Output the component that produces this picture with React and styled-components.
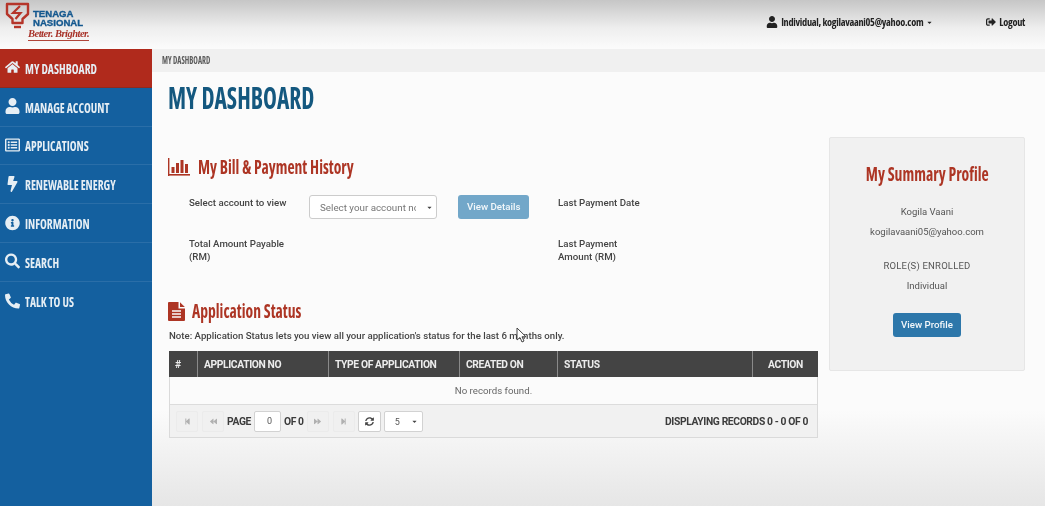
import React from "react";
import styled, { createGlobalStyle } from "styled-components";
import {
  FaHome, FaUser, FaRegListAlt, FaBolt, FaInfoCircle, FaSearch, FaPhoneAlt,
  FaStepBackward, FaBackward, FaForward, FaStepForward, FaSyncAlt, FaSignOutAlt, FaCaretDown,
} from "react-icons/fa";

const din = `"Open Sans", "Roboto", sans-serif`;
const body = `"Roboto", "Liberation Sans", sans-serif`;

const Global = createGlobalStyle`
  html, body { margin: 0; padding: 0; background: #fafafa; }
  * { box-sizing: border-box; }
`;

const Page = styled.div`
  position: relative;
  width: 1045px;
  height: 506px;
  overflow: hidden;
  display: flex;
  flex-direction: column;
  font-family: ${body};
  color: #444;
  filter: blur(0.35px);
  background: linear-gradient(#fbfbfb 0, #fbfbfb 410px, #e6e6e6 506px);
`;

const Squeeze = styled.span`
  display: inline-block;
  white-space: nowrap;
  transform: scaleX(${(p) => p.$k});
  transform-origin: ${(p) => p.$origin || "left"} center;
`;

const Header = styled.header`
  height: 49px;
  flex: none;
  display: flex;
  align-items: center;
  justify-content: space-between;
  padding: 0 20px 5px 5px;
  background: linear-gradient(#c6c6c6 0, #eeeeee 28px, #fbfbfb 48px);
`;

const Logo = styled.div`
  display: flex;
  gap: 3px;
  position: relative;
  height: 44px;
  align-self: flex-start;
  margin-top: 2px;
`;

const BrandName = styled.div`
  font: 700 9.6px/9px "Liberation Sans", sans-serif;
  color: #14588f;
  padding-top: 6.5px;
  -webkit-text-stroke: 0.35px #14588f;
`;

const Tagline = styled.div`
  position: absolute;
  left: 23px;
  top: 26px;
  height: 13px;
  font: italic 700 10.5px/12px "Liberation Serif", serif;
  letter-spacing: -0.5px;
  color: #a8332a;
  border-bottom: 1px solid #b0453a;
  white-space: nowrap;
`;

const UserNav = styled.nav`
  display: flex;
  align-items: center;
  font: 700 condensed 10.3px/14px ${din};
  letter-spacing: -0.28px;
  color: #222;
`;

const NavLink = styled.span`
  display: inline-flex;
  align-items: center;
  gap: 3px;
  margin-left: ${(p) => p.$gap || 0}px;
  svg { flex: none; }
`;

const Row = styled.div`
  flex: 1;
  display: flex;
  min-height: 0;
`;

const Sidebar = styled.aside`
  width: 152px;
  flex: none;
  background: #14609f;
`;

const MenuItem = styled.div`
  height: 38.8px;
  display: flex;
  align-items: center;
  gap: 5px;
  padding: 2px 0 0 5px;
  background: ${(p) => (p.$active ? "#b02a1c" : "transparent")};
  border-bottom: 1px solid ${(p) => (p.$active ? "#8f2a1f" : "#2a6ea8")};
  color: #e6eef4;
  font: 700 condensed 14.5px/18px ${din};
  white-space: nowrap;
  &:last-child { border-bottom: none; }
`;

const MenuIcon = styled.span`
  width: 15px;
  display: flex;
  justify-content: center;
  font-size: 16px;
  margin-bottom: 3px;
`;

const Content = styled.main`
  flex: 1;
  min-width: 0;
`;

const Crumb = styled.div`
  height: 23px;
  padding-left: 10px;
  background: #f0f0f0;
  font: 700 condensed 10.3px/23px ${din};
  color: #5a5a5a;
`;

const PageTitle = styled.h1`
  margin: 9px 0 0 16px;
  height: 38px;
  font: 700 condensed 29.5px/34px ${din};
  color: #14587f;
`;

const Columns = styled.div`
  display: grid;
  grid-template-columns: 649px 196px;
  column-gap: 11px;
  padding-left: 17px;
`;

const Main = styled.section`
  padding-top: 36px;
`;

const SectionTitle = styled.h2`
  margin: 0 0 0 -1px;
  display: flex;
  align-items: center;
  height: 24px;
  gap: ${(p) => p.$gap}px;
  font: 700 condensed 20px/24px ${din};
  color: #ad3524;
`;

const BillGrid = styled.div`
  display: grid;
  grid-template-columns: 120px 149px 100px 200px;
  padding: 16px 0 0 20px;
  font-size: 9.7px;
  line-height: 13px;
  font-weight: 500;
  color: #444;
`;

const Label = styled.div`
  padding-top: ${(p) => p.$pt || 0}px;
`;

const FakeSelect = styled.div`
  width: 128px;
  height: 24px;
  background: #fff;
  border: 1px solid #ccc;
  border-radius: 3px;
  display: flex;
  align-items: center;
  padding: 0 3px 0 10px;
  font-size: 9.8px;
  font-weight: 400;
  color: #777;
  white-space: nowrap;
`;

const SelectText = styled.span`
  width: 96px;
  overflow: hidden;
`;

const Caret = styled.span`
  flex: none;
  margin-left: auto;
  color: #444;
  display: flex;
  font-size: 7px;
`;

const Button = styled.div`
  display: inline-block;
  height: 24px;
  padding: 0 ${(p) => p.$pad}px;
  background: ${(p) => p.$bg};
  border-radius: 3px;
  font: 500 9.7px/24px ${body};
  color: #f2f7fa;
`;

const SecondRow = styled.div`
  grid-column: 1 / -1;
  display: grid;
  grid-template-columns: 369px 200px;
  padding-top: 18px;
`;

const AppSection = styled.div`
  margin-top: 36px;
`;

const Note = styled.p`
  margin: 6px 0 0 0;
  height: 16px;
  font-size: 9.65px;
  line-height: 13px;
  color: #444;
  font-weight: 500;
`;

const Table = styled.div`
  margin-top: 6px;
  border: 1px solid #dadada;
  border-top: none;
`;

const TableHead = styled.div`
  display: grid;
  grid-template-columns: 28px 131px 131px 98px 195px 1fr;
  height: 26px;
  background: #444;
  margin: 0 -1px;
`;

const HeadCell = styled.div`
  height: 26px;
  border-left: ${(p) => (p.$first ? "none" : "1px solid #8a8a8a")};
  padding: 1px 0 0 ${(p) => (p.$center ? 0 : 6)}px;
  text-align: ${(p) => (p.$center ? "center" : "left")};
  font: 700 10.3px/25px ${body};
  letter-spacing: -0.38px;
  color: #ececec;
  white-space: nowrap;
`;

const EmptyRow = styled.div`
  height: 28px;
  background: #fbfbfb;
  border-bottom: 1px solid #dcdcdc;
  text-align: center;
  font-size: 9.7px;
  line-height: 28px;
  color: #666;
`;

const Pager = styled.div`
  height: 32px;
  background: #f1f1f1;
  display: flex;
  align-items: center;
  padding: 1px 9px 0 6px;
`;

const PagerBtn = styled.div`
  width: ${(p) => (p.$on ? 23 : 22)}px;
  height: 21px;
  margin-right: ${(p) => p.$mr || 0}px;
  border: 1px solid ${(p) => (p.$on ? "#cfcfcf" : "#ebebeb")};
  border-radius: 2px;
  background: ${(p) => (p.$on ? "#fff" : "#f0f0f0")};
  color: ${(p) => (p.$on ? "#444" : "#b0b0b0")};
  display: flex;
  align-items: center;
  justify-content: center;
  font-size: 7px;
`;

const PagerText = styled.span`
  font: 700 10.3px/14px ${body};
  letter-spacing: -0.38px;
  color: #3c3c3c;
  margin: 0 ${(p) => p.$mr || 0}px 0 ${(p) => p.$ml || 0}px;
  white-space: nowrap;
`;

const PageInput = styled.div`
  width: 27px;
  height: 21px;
  margin-left: 3px;
  background: #fff;
  border: 1px solid #d2d2d2;
  border-radius: 2px;
  font-size: 9px;
  line-height: 19px;
  text-align: right;
  padding-right: 8px;
  color: #555;
`;

const SizeSelect = styled.div`
  width: 39px;
  height: 21px;
  margin-left: 3px;
  background: #fff;
  border: 1px solid #d2d2d2;
  border-radius: 2px;
  display: flex;
  align-items: center;
  padding: 0 4px 0 10px;
  font-size: 9px;
  color: #555;
`;

const Records = styled.span`
  margin-left: auto;
  font: 700 10.3px/14px ${body};
  letter-spacing: -0.38px;
  color: #3c3c3c;
`;

const SummaryCard = styled.aside`
  margin-top: 18px;
  height: 234px;
  background: #f1f1f1;
  border: 1px solid #e6e6e6;
  border-radius: 2px;
  display: flex;
  flex-direction: column;
  align-items: center;
  padding-top: 23px;
`;

const SummaryTitle = styled.h3`
  margin: 0 0 15px;
  font: 700 condensed 20px/26px ${din};
  color: #ad3524;
`;

const SummaryLine = styled.div`
  font-size: 9.5px;
  line-height: 20px;
  color: #555;
  margin-top: ${(p) => p.$mt || 0}px;
  letter-spacing: ${(p) => p.$ls || 0}px;
`;

const ButtonSlot = styled.div`
  margin-top: ${(p) => p.$mt || 0}px;
`;

const ChartIcon = () => (
  <svg width="22" height="18" viewBox="0 0 22 18" fill="#ad3524">
    <rect x="0" y="0" width="1.4" height="18" />
    <rect x="0" y="16" width="22" height="1.6" />
    <rect x="3.5" y="9" width="3" height="6" />
    <rect x="8" y="5" width="3" height="10" />
    <rect x="12.5" y="2" width="3" height="13" />
    <rect x="17" y="6" width="3" height="9" />
  </svg>
);

const FileIcon = () => (
  <svg width="17" height="19" viewBox="0 0 17 19">
    <path d="M1 0H10.5V6.5H17V18a1 1 0 0 1-1 1H1a1 1 0 0 1-1-1V1a1 1 0 0 1 1-1Z" fill="#ad3524" />
    <path d="M12 0.3L16.8 5H12Z" fill="#ad3524" />
    <path d="M4 9H13M4 12H13M4 15H13" stroke="#fbfbfb" strokeWidth="1.4" />
  </svg>
);

const Cursor = styled.svg`
  position: absolute;
  left: 516px;
  top: 327px;
`;

const LogoMark = () => (
  <svg width="25" height="27" viewBox="0 0 25 27" fill="none" stroke="#b5352a">
    <path d="M2 2H23V12L17.5 17V21H7.5V17L2 12Z" strokeWidth="2.4" strokeLinejoin="round" />
    <path d="M9 25H16" strokeWidth="2.4" />
    <path d="M15 4L8 11H15.5L10.5 17" strokeWidth="2.2" />
  </svg>
);

const menu = [
  ["MY DASHBOARD", FaHome, true],
  ["MANAGE ACCOUNT", FaUser],
  ["APPLICATIONS", FaRegListAlt],
  ["RENEWABLE ENERGY", FaBolt],
  ["INFORMATION", FaInfoCircle],
  ["SEARCH", FaSearch],
  ["TALK TO US", FaPhoneAlt],
];

const heads = ["#", "APPLICATION NO", "TYPE OF APPLICATION", "CREATED ON", "STATUS", "ACTION"];

export default function App() {
  return (
    <Page>
      <Global />
      <Header>
        <Logo>
          <LogoMark />
          <BrandName>TENAGA<br />NASIONAL</BrandName>
          <Tagline>Better. Brighter.</Tagline>
        </Logo>
        <UserNav>
          <NavLink><FaUser size={12} /> Individual, kogilavaani05@yahoo.com <FaCaretDown size={7} /></NavLink>
          <NavLink $gap={53}><FaSignOutAlt size={10} /> Logout</NavLink>
        </UserNav>
      </Header>
      <Row>
        <Sidebar>
          {menu.map(([label, Icon, active]) => (
            <MenuItem key={label} $active={active}>
              <MenuIcon><Icon /></MenuIcon>
              <Squeeze $k={0.795}>{label}</Squeeze>
            </MenuItem>
          ))}
        </Sidebar>
        <Content>
          <Crumb><Squeeze $k={0.75}>MY DASHBOARD</Squeeze></Crumb>
          <PageTitle><Squeeze $k={0.795}>MY DASHBOARD</Squeeze></PageTitle>
          <Columns>
            <Main>
              <SectionTitle $gap={8}><ChartIcon /><Squeeze $k={0.78}>My Bill &amp; Payment History</Squeeze></SectionTitle>
              <BillGrid>
                <Label $pt={1}>Select account to view</Label>
                <FakeSelect>
                  <SelectText>Select your account no</SelectText>
                  <Caret><FaCaretDown /></Caret>
                </FakeSelect>
                <div>
                  <Button $bg="#72a7c9" $pad={9}>View Details</Button>
                </div>
                <Label $pt={1}>Last Payment Date</Label>
                <SecondRow>
                  <Label>Total Amount Payable<br />(RM)</Label>
                  <Label>Last Payment<br />Amount (RM)</Label>
                </SecondRow>
              </BillGrid>
              <AppSection>
                <SectionTitle $gap={7}><FileIcon /><Squeeze $k={0.78}>Application Status</Squeeze></SectionTitle>
                <Note>Note: Application Status lets you view all your application's status for the last 6 months only.</Note>
                <Table>
                  <TableHead>
                    {heads.map((h, i) => (
                      <HeadCell key={h} $first={i === 0} $center={i === 5}>{h}</HeadCell>
                    ))}
                  </TableHead>
                  <EmptyRow>No records found.</EmptyRow>
                  <Pager>
                    <PagerBtn $mr={4}><FaStepBackward /></PagerBtn>
                    <PagerBtn><FaBackward /></PagerBtn>
                    <PagerText $ml={3}>PAGE</PagerText>
                    <PageInput>0</PageInput>
                    <PagerText $ml={3} $mr={3}>OF 0</PagerText>
                    <PagerBtn $mr={4}><FaForward /></PagerBtn>
                    <PagerBtn $mr={3}><FaStepForward /></PagerBtn>
                    <PagerBtn $on><FaSyncAlt size={9} /></PagerBtn>
                    <SizeSelect>5<Caret><FaCaretDown /></Caret></SizeSelect>
                    <Records>DISPLAYING RECORDS 0 - 0 OF 0</Records>
                  </Pager>
                </Table>
              </AppSection>
            </Main>
            <SummaryCard>
              <SummaryTitle><Squeeze $k={0.785} $origin="center">My Summary Profile</Squeeze></SummaryTitle>
              <SummaryLine>Kogila Vaani</SummaryLine>
              <SummaryLine>kogilavaani05@yahoo.com</SummaryLine>
              <SummaryLine $mt={14} $ls={0.2}>ROLE(S) ENROLLED</SummaryLine>
              <SummaryLine>Individual</SummaryLine>
              <ButtonSlot $mt={17}><Button $bg="#2d77aa" $pad={8}>View Profile</Button></ButtonSlot>
            </SummaryCard>
          </Columns>
        </Content>
      </Row>
      <Cursor width="11" height="16" viewBox="0 0 11 16">
        <path d="M1 1V13L4 10.5L6 15L8 14L6 9.8H10Z" fill="#fff" stroke="#444" strokeWidth="1" />
      </Cursor>
    </Page>
  );
}
